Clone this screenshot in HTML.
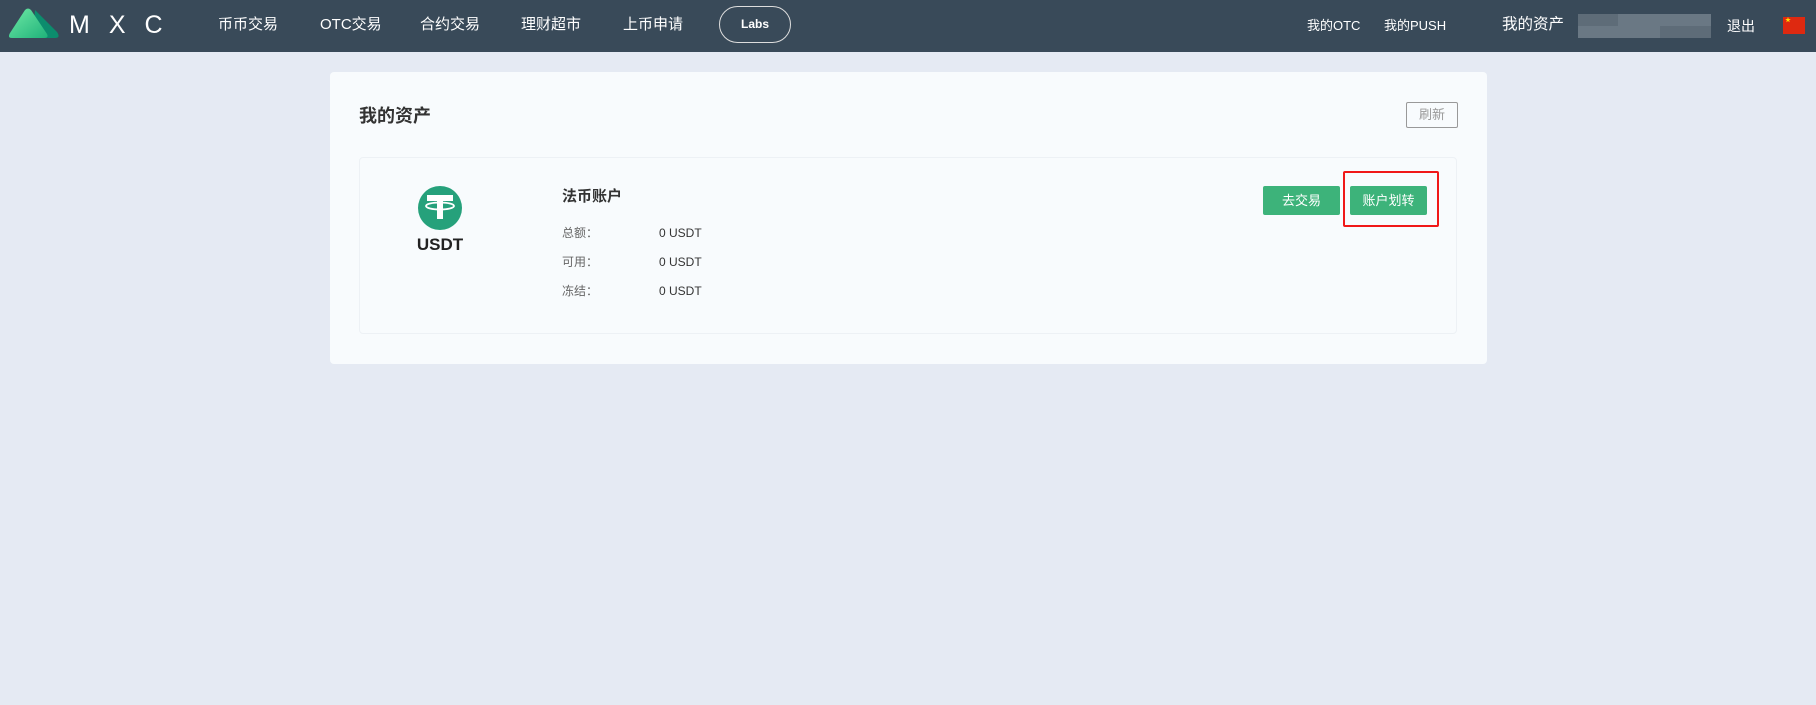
<!DOCTYPE html>
<html><head><meta charset="utf-8"><style>
*{margin:0;padding:0;box-sizing:border-box}
body{width:1816px;height:705px;background:#e5eaf3;font-family:"Liberation Sans","Noto Sans CJK SC",sans-serif;position:relative;overflow:hidden}
.hd{position:absolute;left:0;top:0;width:1816px;height:52px;background:#394a59;color:#fff}
.t{position:absolute;white-space:nowrap}
.nav{font-size:15px;top:15px;line-height:20px}
.card{position:absolute;left:330px;top:72px;width:1157px;height:292px;background:#f8fbfd;border-radius:4px}
.inner{position:absolute;left:359px;top:157px;width:1098px;height:177px;border:1px solid #edf1f5;border-radius:4px}
.btn{position:absolute;top:186px;height:29px;width:77px;background:#3db37a;color:#fff;font-size:13px;text-align:center;line-height:29px;border-radius:2px}
.lb{font-size:12px;color:#666;line-height:16px}
.vl{font-size:12px;color:#333;line-height:16px}
</style></head><body>
<div class="hd">
<svg class="t" style="left:9px;top:8px" width="52" height="30" viewBox="0 0 52 30">
<defs><linearGradient id="g" x1="0" y1="0" x2="1" y2="1"><stop offset="0" stop-color="#6fe9a5"/><stop offset="1" stop-color="#1fb27a"/></linearGradient></defs>
<path d="M26 2 L48 24 Q52 30 46 30 L24 30 Z" fill="#0c8c6d"/>
<path d="M16 2 Q19 -1 22 2 L38 26 Q40 30 35 30 L3 30 Q-2 30 1 25 Z" fill="url(#g)"/>
</svg>
<div class="t" style="left:69px;top:12px;font-size:25px;line-height:26px;letter-spacing:19px;color:#fff">MXC</div>
<div class="t nav" style="left:218px">币币交易</div>
<div class="t nav" style="left:320px">OTC交易</div>
<div class="t nav" style="left:420px">合约交易</div>
<div class="t nav" style="left:521px">理财超市</div>
<div class="t nav" style="left:623px">上币申请</div>
<div class="t" style="left:719px;top:6px;width:72px;height:37px;border:1.5px solid #ddd;border-radius:19px;font-size:12px;font-weight:bold;text-align:center;line-height:34px">Labs</div>
<div class="t" style="left:1307px;top:18px;font-size:13px;line-height:16px">我的OTC</div>
<div class="t" style="left:1384px;top:18px;font-size:13px;line-height:16px">我的PUSH</div>
<div class="t" style="left:1502px;top:15px;font-size:15.5px;line-height:20px">我的资产</div>
<div class="t" style="left:1578px;top:14px;width:133px;height:24px;background:#6a7884"></div>
<div class="t" style="left:1578px;top:14px;width:40px;height:12px;background:#5e6c78"></div>
<div class="t" style="left:1660px;top:26px;width:51px;height:12px;background:#5e6c78"></div>
<div class="t" style="left:1727px;top:17px;font-size:14px;line-height:18px">退出</div>
<div class="t" style="left:1783px;top:17px;width:22px;height:17px;background:#de2910;color:#ffde00;font-size:6px;line-height:8px;padding-left:2px">★</div>
</div>
<div class="card"></div>
<div class="t" style="left:359px;top:104px;font-size:18px;line-height:24px;font-weight:bold;color:#333">我的资产</div>
<div class="t" style="left:1406px;top:102px;width:52px;height:26px;border:1px solid #999;border-radius:2px;font-size:13px;color:#999;text-align:center;line-height:24px">刷新</div>
<div class="inner"></div>
<svg class="t" style="left:418px;top:186px" width="44" height="44" viewBox="0 0 44 44">
<circle cx="22" cy="22" r="22" fill="#26a17b"/>
<rect x="9" y="9" width="26" height="6" fill="#fff"/><rect x="19" y="9" width="6" height="24" fill="#fff"/>
<ellipse cx="22" cy="20" rx="14" ry="3.5" fill="none" stroke="#fff" stroke-width="1.8"/>
</svg>
<div class="t" style="left:398px;top:234px;width:84px;text-align:center;font-size:17px;line-height:22px;font-weight:bold;color:#222">USDT</div>
<div class="t" style="left:562px;top:187px;font-size:15px;line-height:20px;color:#333;font-weight:bold">法币账户</div>
<div class="t lb" style="left:562px;top:225px">总额：</div><div class="t vl" style="left:659px;top:225px">0 USDT</div>
<div class="t lb" style="left:562px;top:254px">可用：</div><div class="t vl" style="left:659px;top:254px">0 USDT</div>
<div class="t lb" style="left:562px;top:283px">冻结：</div><div class="t vl" style="left:659px;top:283px">0 USDT</div>
<div class="btn" style="left:1263px">去交易</div>
<div class="btn" style="left:1350px">账户划转</div>
<div class="t" style="left:1343px;top:171px;width:96px;height:56px;border:2px solid #f01818;border-radius:2px"></div>
</body></html>
